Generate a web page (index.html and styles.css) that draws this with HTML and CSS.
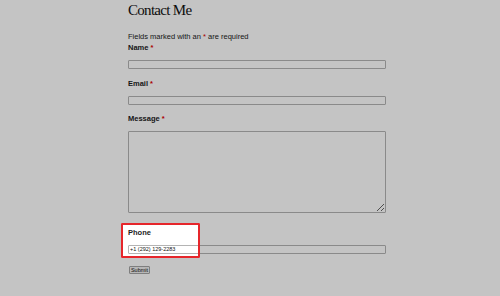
FILE: index.html
```html
<!DOCTYPE html>
<html lang="en">
<head>
    <meta charset="UTF-8">
    <meta name="viewport" content="width=device-width, initial-scale=1.0">
    <title>Contact Me</title>
    <link rel="stylesheet" href="styles.css">
</head>
<body>
    <main class="page">
        <h1 class="title">Contact Me</h1>
        <form class="contact-form" onsubmit="return false">
            <p class="note">Fields marked with an <span class="req">*</span> are required</p>

            <div class="field">
                <label class="field-label" for="name">Name <span class="req">*</span></label>
                <input class="field-input" type="text" id="name">
            </div>

            <div class="field">
                <label class="field-label" for="email">Email <span class="req">*</span></label>
                <input class="field-input" type="email" id="email">
            </div>

            <div class="field field-message">
                <label class="field-label" for="message">Message <span class="req">*</span></label>
                <textarea class="field-input field-textarea" id="message"></textarea>
            </div>

            <div class="field field-focus">
                <span class="spotlight"></span>
                <label class="field-label" for="phone">Phone</label>
                <input class="field-input" type="tel" id="phone" value="+1 (292) 129-2283">
            </div>

            <button class="submit" type="submit">Submit</button>
        </form>
    </main>
</body>
</html>
```

FILE: styles.css
```css
html {
    background-color: #ffffff;
}

body {
    margin: 0;
    min-height: 100vh;
    overflow: hidden;
    background-color: #ffffff;
    font-family: "Liberation Sans", Arial, sans-serif;
    color: #1c1c1c;
}

.page {
    width: 258px;
    margin-left: 128px;
    padding-top: 1px;
}

.title {
    margin: 0;
    font-family: "Liberation Serif", "Times New Roman", serif;
    font-weight: normal;
    font-size: 15px;
    line-height: 18px;
    letter-spacing: -0.7px;
    color: #111;
}

.note {
    margin: 13px 0 2px;
    font-size: 7.5px;
    line-height: 9px;
}

.req {
    color: #e00000;
}

.field {
    margin-bottom: 9.5px;
}

.field-message {
    margin-bottom: 14.5px;
}

.field-label {
    display: block;
    margin-bottom: 8px;
    font-size: 7.5px;
    line-height: 9px;
    font-weight: bold;
}

.field-input {
    display: block;
    box-sizing: border-box;
    width: 100%;
    height: 9px;
    margin: 0;
    padding: 0 1px;
    border: 1px solid #b4b4b4;
    border-radius: 1px;
    background-color: #ffffff;
    font-family: "Liberation Sans", Arial, sans-serif;
    font-size: 5.5px;
    color: #111;
}

.field-textarea {
    height: 82px;
    resize: vertical;
}

.field-focus {
    position: relative;
    margin-bottom: 12px;
}

.spotlight {
    position: absolute;
    top: -5px;
    left: -7px;
    width: 79px;
    height: 35px;
    box-sizing: border-box;
    border: 2px solid #e6262b;
    border-radius: 1px;
    box-shadow: 0 0 0 2000px rgba(0, 0, 0, 0.23);
    pointer-events: none;
}

.submit {
    display: block;
    width: 21px;
    height: 8px;
    margin: 0 0 0 1px;
    padding: 0;
    border: 1px solid #a4a4a4;
    border-radius: 1px;
    background-color: #efefef;
    font-family: "Liberation Sans", Arial, sans-serif;
    font-size: 5.5px;
    line-height: 6px;
    color: #111;
}
```
